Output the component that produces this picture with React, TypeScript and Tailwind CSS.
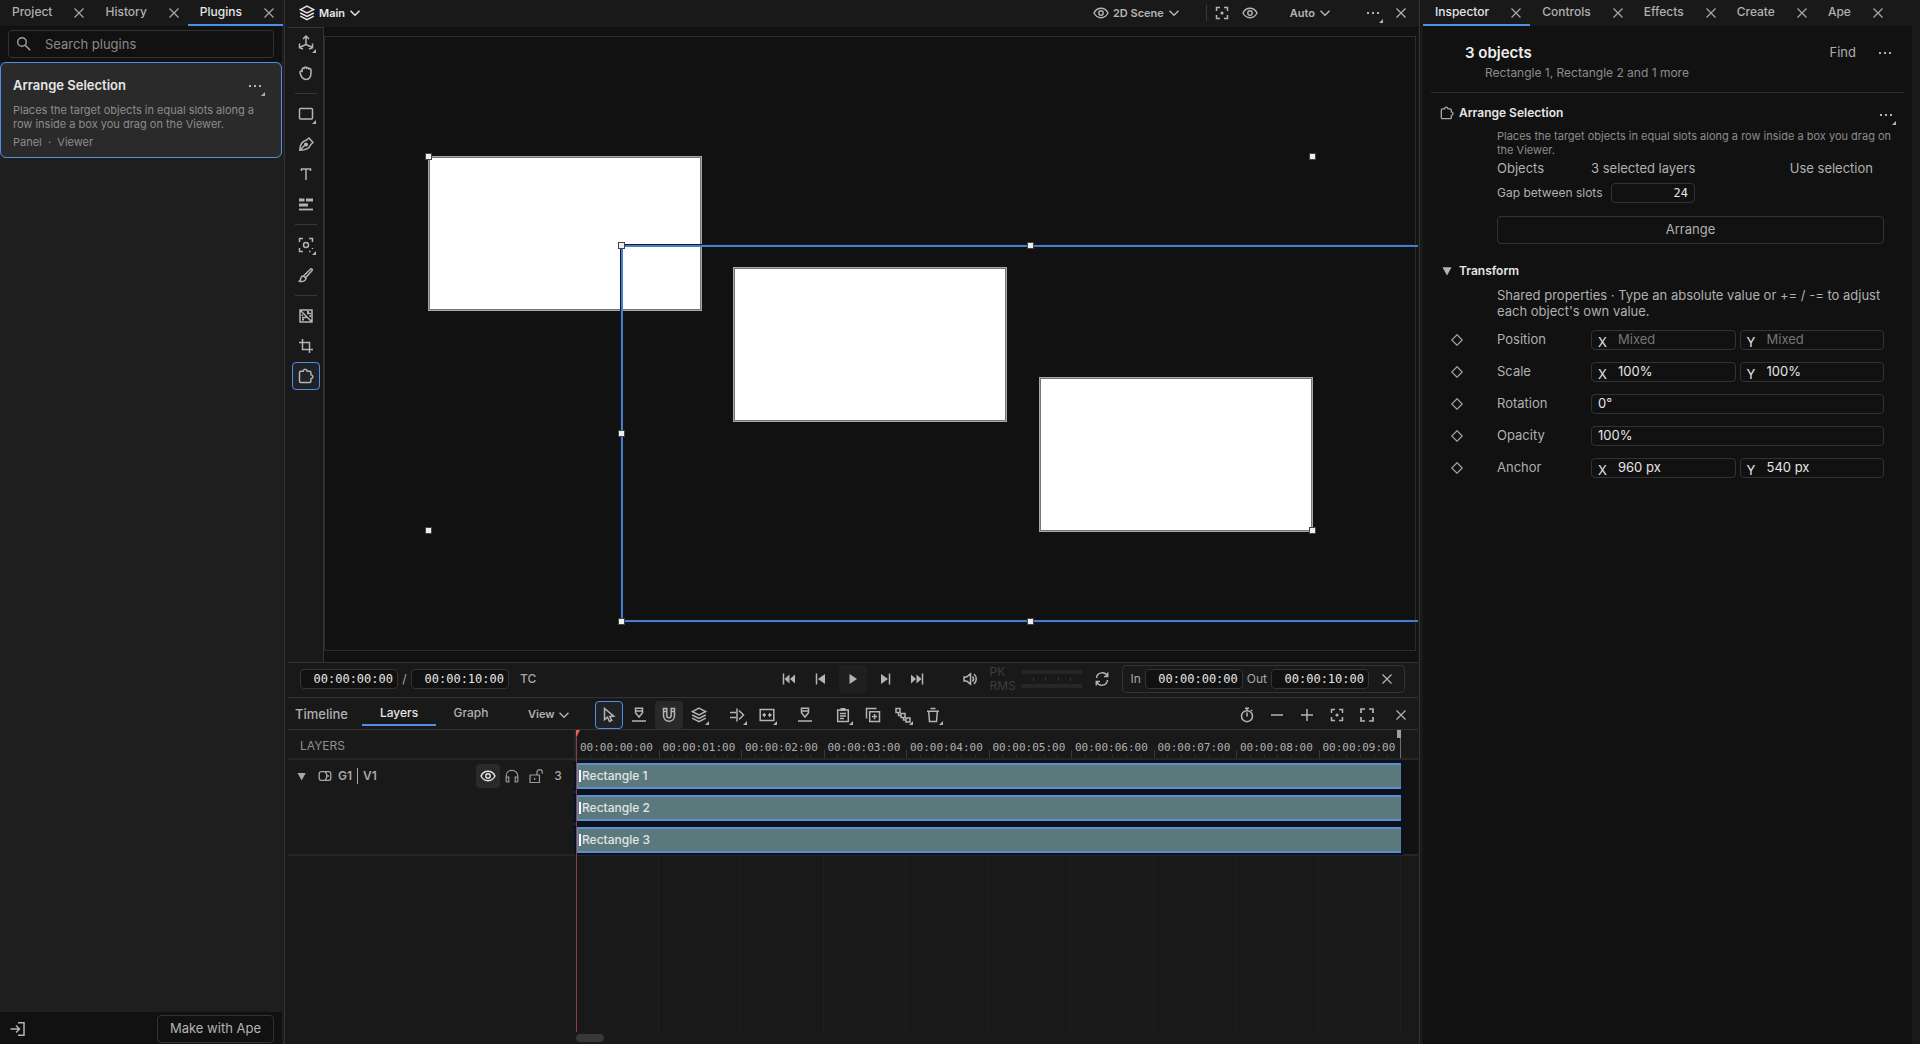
import React, { useState } from 'react';
import clsx from 'clsx';

type IconProps = { className?: string; children: React.ReactNode };

function Icon({ className = 'size-4', children }: IconProps) {
  return (
    <svg
      viewBox="0 0 16 16"
      className={clsx('shrink-0', className)}
      fill="none"
      stroke="currentColor"
      strokeWidth="1.5"
      aria-hidden="true"
    >
      {children}
    </svg>
  );
}

const CloseIcon = () => (
  <Icon><path d="M3.500 3.500l9 9M12.500 3.500l-9 9" strokeWidth="1.200" /></Icon>
);

const ChevronIcon = () => (
  <Icon className="size-3"><path d="M2 5l6 6 6-6" strokeWidth="2" /></Icon>
);

const DotsIcon = () => (
  <Icon><path d="M2 7h2v2H2zM7 7h2v2H7zM12 7h2v2h-2z" fill="currentColor" stroke="none" /></Icon>
);

const LayersIcon = () => (
  <Icon>
    <path d="M8 1.200l6.600 3.400L8 8 1.400 4.600z" />
    <path d="M1.200 8L8 11.400 14.800 8M1.200 11.200L8 14.600l6.800-3.400" />
  </Icon>
);

const EyeIcon = () => (
  <Icon>
    <path d="M1 8c1.500-3 4-4.700 7-4.700S13.500 5 15 8c-1.500 3-4 4.700-7 4.700S2.500 11 1 8z" strokeWidth="1.400" />
    <circle cx="8" cy="8" r="2.200" strokeWidth="1.400" />
  </Icon>
);

const FocusIcon = () => (
  <Icon>
    <path d="M2.500 6V2.500H6M10 2.500h3.500V6M13.500 10v3.500H10M6 13.500H2.500V10" />
    <circle cx="8" cy="8" r="1.600" fill="currentColor" stroke="none" />
  </Icon>
);

const PuzzleIcon = ({ className }: { className?: string }) => (
  <Icon className={className}>
    <path
      d="M1.500 4.500c0-.8.400-1.200 1.200-1.200h2.500c.2-1.400.900-2.100 2-2.100s1.800.7 2 2.100h2.500c.8 0 1.200.4 1.200 1.200v2.300c1.300.2 2 .9 2 2s-.7 1.800-2 2v2.500c0 .8-.4 1.200-1.200 1.200h-9c-.8 0-1.200-.4-1.200-1.200z"
      strokeLinejoin="round"
    />
  </Icon>
);

const PinIcon = () => (
  <Icon>
    <path d="M4.500 1.200h7v4.600L8 10 4.500 5.800zM4.500 4h7M1 14h14" />
  </Icon>
);

const icons = {
  move: (
    <Icon>
      <path d="M8 9.500V1.500M5 4l3-3 3 3M8 9.500l-6.500 3M8 9.500l6.500 3M1.500 8.500v4.200l3.500 1.300M14.500 8.500v4.200l-3.500 1.300" />
    </Icon>
  ),
  hand: (
    <Icon>
      <path d="M2 7.500c-.3-1.500 1.300-2 2-.8L4.200 4c.2-1.400 1.600-1.300 1.800-.3.200-2.200 2.300-2.200 2.500-.2.600-1.400 2.300-1 2.300.6.800-.9 2.200-.4 2.200 1v2.700c0 4.500-1.700 6.700-5 6.700-3 0-5-2.500-6-7z" strokeLinejoin="round" />
    </Icon>
  ),
  rect: <Icon><rect x="1.500" y="2.500" width="13" height="10.500" rx="1" /></Icon>,
  pen: (
    <Icon>
      <path d="M1.800 14.200C1.800 9.500 3.500 5.500 8.500 4L11 2l4 4.500-2.300 2.200c-1.500 4-6.200 5.500-10.900 5.500zM2 14l5-5" />
      <circle cx="8" cy="8.500" r="1.300" fill="currentColor" />
    </Icon>
  ),
  text: <Icon><path d="M3.500 5V3h9v2M8 3v11" /></Icon>,
  align: (
    <Icon>
      <path d="M1 4h5.500M8 4h7M1 9h9" strokeWidth="3" />
      <path d="M1 13.500h14" strokeWidth="1.800" />
    </Icon>
  ),
  target: (
    <Icon>
      <path d="M1.500 5V1.500H5M11 1.500h3.500V5M5 14.500H1.500V11M11 14.500h1.500M14.500 11v1" />
      <circle cx="8" cy="8" r="2.500" />
    </Icon>
  ),
  brush: (
    <Icon>
      <path d="M5.500 9L12.300 2.200c1.200-1 2.600.3 1.600 1.500L7.500 10.800M5.500 9l2.500 2.200c0 3-3.500 3.700-6.500 3 1.500-.7.700-1.700 1.300-3.200.5-1.300 1.700-2 2.700-2z" />
    </Icon>
  ),
  texture: (
    <Icon>
      <path d="M2 2h12v12H2zM2 2l12 12M4 9.500h4M9 5.500h4" />
      <path d="M9 3h2v2H9zM4 10.500h2v2H4zM3.500 6.500h1.500V8H3.500zM11.500 7h1.500v2h-1.500z" fill="currentColor" stroke="none" />
    </Icon>
  ),
  crop: <Icon><path d="M4.500 1v10.500H15M1 4.500h10.500V15" /></Icon>,
  pointer: (
    <Icon><path d="M3.500 1.500v11.200l3-2.500 2 4.300 2.200-1-1.900-4.100 4-.3z" /></Icon>
  ),
  magnet: (
    <Icon>
      <path d="M2.500 1.500h3.300v7c0 3 4.400 3 4.400 0v-7h3.300v7c0 7.600-11 7.600-11 0zM2.500 4.500h3.300M10.200 4.500h3.300" />
    </Icon>
  ),
  split: (
    <Icon><path d="M1 5.500h6M1 10.500h6M8 1.500v13M10 3.500L14.500 8 10 12.500" /></Icon>
  ),
  fit: (
    <Icon>
      <path d="M1.200 2.500h13.600v11H1.200zM4 8h3M9 8h3" />
      <path d="M3 8l3-2.500v5zM13 8l-3-2.500v5z" fill="currentColor" stroke="none" />
    </Icon>
  ),
  clipboard: (
    <Icon>
      <path d="M2.700 3h10.600v11.500H2.700zM5 6.500h6M5 9h6M5 11.500h4" />
      <path d="M5.500 1h5v3h-5z" fill="currentColor" stroke="none" />
    </Icon>
  ),
  duplicate: (
    <Icon><path d="M4.700 4.700h9.800v9.800H4.700zM1.500 11.500v-10h10M9.600 7v5.200M7 9.600h5.200" /></Icon>
  ),
  nodes: (
    <Icon><path d="M1 1.500h4v4H1zM6 6.500h4v4H6zM11 11h4v4h-4zM3.500 5.500v3H6M8.500 10.500v2.500H11" /></Icon>
  ),
  trash: (
    <Icon><path d="M2 4.200h12M5.500 1.500h5M3.700 4.500l.8 10h7l.8-10" /></Icon>
  ),
  timer: (
    <Icon><circle cx="8" cy="9.200" r="5.500" /><path d="M6 1.200h4M8 5.500v4M12 4l1.200-1.200M8 1.200v2.500" /></Icon>
  ),
  minus: <Icon><path d="M2 8h12" /></Icon>,
  plus: <Icon><path d="M2 8h12M8 2v12" /></Icon>,
  expand: <Icon><path d="M2 6V2h4M10 2h4v4M14 10v4h-4M6 14H2v-4" strokeWidth="1.700" /></Icon>,
  first: (
    <Icon>
      <path d="M2.500 2.500v11" />
      <path d="M8.500 3.500v9L3.500 8zM14 3.500v9L9 8z" fill="currentColor" stroke="none" />
    </Icon>
  ),
  prev: (
    <Icon><path d="M3.500 2.500v11" /><path d="M12 3v10L5 8z" fill="currentColor" stroke="none" /></Icon>
  ),
  play: <Icon><path d="M4.500 3v10L12 8z" fill="currentColor" stroke="none" /></Icon>,
  next: (
    <Icon><path d="M12.500 2.500v11" /><path d="M4 3v10L11 8z" fill="currentColor" stroke="none" /></Icon>
  ),
  last: (
    <Icon>
      <path d="M13.500 2.500v11" />
      <path d="M2 3.500v9L7 8zM7.500 3.500v9l5-4.500z" fill="currentColor" stroke="none" />
    </Icon>
  ),
  volume: (
    <Icon><path d="M1 6h2.500L7.500 2.800v10.400L3.500 10H1zM9.500 5.500c1.300 1.400 1.300 3.600 0 5M11 3c3 2.700 3 7.300 0 10" /></Icon>
  ),
  loop: (
    <Icon><path d="M2.500 7c.5-6 8.500-7 10.800-2M13.500 9c-.5 6-8.500 7-10.800 2M13.700 1.500v4H10M2.300 14.500v-4H6" /></Icon>
  ),
  headphones: (
    <Icon><path d="M2.200 14V8c0-7.500 11.600-7.500 11.600 0v6M2.200 9.200h2.600V14H2.200M13.800 9.200h-2.600V14h2.600" strokeWidth="1.200" /></Icon>
  ),
  unlock: (
    <Icon><path d="M2 7h9.500v7.500H2zM9 7V4.300c0-3.600 5.300-3.600 5.300 0v1.500M6.700 10v2" strokeWidth="1.200" /></Icon>
  ),
  group: (
    <Icon>
      <rect x="2.200" y="3.700" width="11.600" height="8.600" rx="2" strokeWidth="1.300" />
      <path d="M8.200 3.700c2 2.600 2 6 0 8.600M10 8h2" strokeWidth="1.300" />
    </Icon>
  ),
};

type ToolButtonProps = {
  label: string;
  children: React.ReactNode;
  active?: boolean;
  filled?: 'soft' | 'strong';
  menu?: boolean;
};

function ToolButton({ label, children, active, filled, menu }: ToolButtonProps) {
  return (
    <button
      type="button"
      aria-label={label}
      aria-pressed={active}
      className={clsx(
        'relative flex size-7 shrink-0 items-center justify-center rounded text-[#b4b4b4]',
        active && 'border border-[#4f8fe6] bg-[#202225]',
        filled === 'soft' && 'bg-[#1f1f1f]',
        filled === 'strong' && 'bg-[#292929]',
      )}
    >
      {children}
      {menu && (
        <svg viewBox="0 0 4 4" className="absolute right-1 bottom-1 size-1" fill="currentColor" aria-hidden="true">
          <path d="M4 0v4H0z" />
        </svg>
      )}
    </button>
  );
}

function PanelTabs({ tabs, active }: { tabs: string[]; active: string }) {
  return (
    <div role="tablist" className="flex h-[26px] shrink-0 bg-[#191919]">
      {tabs.map((tab) => (
        <div
          key={tab}
          className={clsx(
            'flex items-center border-b-2 pl-3',
            tab === active ? 'border-[#4f8fe6]' : 'border-transparent',
          )}
        >
          <button
            type="button"
            role="tab"
            aria-selected={tab === active}
            className={clsx('pr-[15px] text-[12px] leading-4 font-medium', tab === active ? 'text-[#e6e6e6]' : 'text-[#b0b0b0]')}
          >
            {tab}
          </button>
          <button type="button" aria-label={`Close ${tab}`} className="w-[26px] pt-0.5 pl-1 text-[#a8a8a8]">
            <CloseIcon />
          </button>
        </div>
      ))}
    </div>
  );
}

function PluginsPanel() {
  const [query, setQuery] = useState('');
  return (
    <aside className="flex w-[285px] shrink-0 flex-col border-r border-[#333] bg-[#1e1e1e] pr-0.5">
      <PanelTabs tabs={['Project', 'History', 'Plugins']} active="Plugins" />
      <div className="bg-[#111] px-2 py-1">
        <label className="flex h-7 items-center gap-[13px] rounded border border-[#333] pl-[7px] text-[#a0a0a0]">
          <Icon><circle cx="6" cy="6" r="4.300" strokeWidth="1.400" /><path d="M9.200 9.200l5 5" /></Icon>
          <input
            type="search"
            aria-label="Search plugins"
            placeholder="Search plugins"
            value={query}
            onChange={(e) => setQuery(e.target.value)}
            className="min-w-0 flex-1 bg-transparent pt-0.5 text-[13px] text-[#ddd] outline-none placeholder:text-[#8a8a8a]"
          />
        </label>
      </div>
      <article className="rounded-md border border-[#4f8fe6] bg-[#2a2a2a] px-3 pt-[9px] pb-2">
        <div className="flex items-center justify-between">
          <h2 className="text-[13px] font-semibold text-[#e6e6e6]">Arrange Selection</h2>
          <ToolButton label="Plugin menu" menu><DotsIcon /></ToolButton>
        </div>
        <p className="pt-[3px] text-[11px] leading-[14px] text-[#8c8c8c]">
          Places the target objects in equal slots along a row inside a box you drag on the Viewer.
        </p>
        <p className="pt-1 text-[11px] leading-[14px] whitespace-pre text-[#8c8c8c]">Panel  ·  Viewer</p>
      </article>
      <footer className="mt-auto flex h-8 items-center justify-between bg-[#111] pt-px pr-2 pl-2.5">
        <button type="button" aria-label="Collapse panel" className="text-[#b4b4b4]">
          <Icon><path d="M8 1.800h6v12.400H8M0.500 8h9M6 4.500L9.500 8 6 11.500" /></Icon>
        </button>
        <button type="button" className="h-7 rounded border border-[#333] px-3 text-[13px] text-[#b4b4b4]">
          Make with Ape
        </button>
      </footer>
    </aside>
  );
}

function ViewerHeader() {
  return (
    <header className="flex h-[26px] shrink-0 items-center bg-[#191919] pr-[3px] text-[11px] font-semibold text-[#b4b4b4]">
      <button type="button" className="flex items-center gap-1 pl-[11px] text-[#e6e6e6]">
        <LayersIcon /> Main <ChevronIcon />
      </button>
      <button type="button" className="ml-auto flex items-center gap-1">
        <EyeIcon /> 2D Scene <ChevronIcon />
      </button>
      <div className="mr-px ml-[26px] h-4 w-px bg-[#383838]" />
      <ToolButton label="Fit view"><FocusIcon /></ToolButton>
      <ToolButton label="Preview"><EyeIcon /></ToolButton>
      <button type="button" className="mr-7 ml-[26px] flex items-center gap-1">
        Auto <ChevronIcon />
      </button>
      <ToolButton label="Viewer menu" menu><DotsIcon /></ToolButton>
      <ToolButton label="Close viewer"><CloseIcon /></ToolButton>
    </header>
  );
}

const Divider = () => <div className="my-1 h-px w-[22px] bg-[#383838]" />;

function ToolRail() {
  return (
    <nav className="flex w-9 shrink-0 flex-col items-center gap-0.5 border-t border-r border-[#333] bg-[#191919] pt-px">
      <ToolButton label="Move" menu>{icons.move}</ToolButton>
      <ToolButton label="Pan">{icons.hand}</ToolButton>
      <Divider />
      <ToolButton label="Rectangle" menu>{icons.rect}</ToolButton>
      <ToolButton label="Pen">{icons.pen}</ToolButton>
      <ToolButton label="Text">{icons.text}</ToolButton>
      <ToolButton label="Layout">{icons.align}</ToolButton>
      <Divider />
      <ToolButton label="Camera" menu>{icons.target}</ToolButton>
      <ToolButton label="Brush">{icons.brush}</ToolButton>
      <Divider />
      <ToolButton label="Texture">{icons.texture}</ToolButton>
      <ToolButton label="Crop">{icons.crop}</ToolButton>
      <ToolButton label="Arrange Selection" active><PuzzleIcon /></ToolButton>
    </nav>
  );
}

// Positions are in stage pixels, measured from the stage's top left corner
const shapes = [
  { left: 104, top: 129 },
  { left: 409, top: 240 },
  { left: 715, top: 350 },
];

const handles = [
  { left: 101, top: 126 },
  { left: 985, top: 126 },
  { left: 101, top: 500 },
  { left: 985, top: 500 },
  { left: 294, top: 215 },
  { left: 703, top: 215 },
  { left: 294, top: 403 },
  { left: 294, top: 591 },
  { left: 703, top: 591 },
];

function Stage() {
  return (
    <main className="relative flex min-w-0 flex-1 overflow-hidden bg-[#111] pt-[9px] pr-0.5 pb-[11px]">
      <div className="flex-1 border border-[#2c2c2c]" />
      {shapes.map((s) => (
        <div
          key={s.left}
          className="absolute h-[155px] w-[274px] border border-[#a8a8a8] bg-white shadow-[inset_0_0_0_1px_#757575]"
          style={{ left: s.left, top: s.top }}
        />
      ))}
      <div className="absolute top-[218px] left-[297px] h-[377px] w-[830px] border-2 border-[#4a7dc6] shadow-[0_0_0_1px_#0c1a33]" />
      {handles.map((h) => (
        <div
          key={`${h.left}-${h.top}`}
          className="absolute size-[7px] border border-[#444] bg-[#eee]"
          style={{ left: h.left, top: h.top }}
        />
      ))}
    </main>
  );
}

function TimeField({ label, value }: { label: string; value: string }) {
  return (
    <input
      aria-label={label}
      defaultValue={value}
      className="h-5 w-[98px] rounded border border-[#333] bg-[#111] pr-1 text-right font-['DejaVu_Sans_Mono',monospace] text-[12px] text-[#e6e6e6]"
    />
  );
}

function Transport() {
  return (
    <div className="grid h-[35px] shrink-0 grid-cols-[1fr_auto_1fr] items-center border-t border-[#333] bg-[#191919] pb-0.5 text-[12px] text-[#a8a8a8]">
      <div className="flex items-center pl-3">
        <TimeField label="Current time" value="00:00:00:00" />
        <span className="w-[13px] text-center">/</span>
        <TimeField label="Duration" value="00:00:10:00" />
        <button type="button" className="pl-[11px] font-medium">TC</button>
      </div>
      <div className="flex items-center gap-1">
        <ToolButton label="Go to start">{icons.first}</ToolButton>
        <ToolButton label="Previous frame">{icons.prev}</ToolButton>
        <ToolButton label="Play" filled="soft">{icons.play}</ToolButton>
        <ToolButton label="Next frame">{icons.next}</ToolButton>
        <ToolButton label="Go to end">{icons.last}</ToolButton>
      </div>
      <div className="flex items-center justify-end pr-[13px]">
        <ToolButton label="Volume">{icons.volume}</ToolButton>
        <div className="w-9 pl-1 text-[12px] leading-[14px] text-[#3c3c3c]">
          <div>PK</div>
          <div>RMS</div>
        </div>
        <div className="flex w-[61px] flex-col gap-[3px]">
          <div className="h-1 bg-[#262626]" />
          <div className="flex h-1 justify-evenly">
            <div className="w-px bg-[#333]" />
            <div className="w-px bg-[#333]" />
            <div className="w-px bg-[#333]" />
            <div className="w-px bg-[#333]" />
          </div>
          <div className="h-1 bg-[#262626]" />
        </div>
        <div className="px-[6px]">
          <ToolButton label="Loop">{icons.loop}</ToolButton>
        </div>
        <div className="flex h-7 items-center gap-1 rounded border border-[#333] pr-[3px] pl-[7px]">
          In
          <TimeField label="In point" value="00:00:00:00" />
          Out
          <TimeField label="Out point" value="00:00:10:00" />
          <ToolButton label="Clear range"><CloseIcon /></ToolButton>
        </div>
      </div>
    </div>
  );
}

function TimelineToolbar() {
  return (
    <div className="flex h-[33px] shrink-0 items-center border-y border-[#333] text-[12px] text-[#b0b0b0]">
      <h2 className="w-[74px] pt-0.5 pl-[7px] text-[13px] font-medium">Timeline</h2>
      <div role="tablist" className="flex">
        <button type="button" role="tab" aria-selected="true" className="h-[25px] w-[74px] border-b-2 border-[#4f8fe6] font-medium text-[#e6e6e6]">
          Layers
        </button>
        <button type="button" role="tab" aria-selected="false" className="h-[25px] w-[70px] border-b-2 border-transparent font-medium">
          Graph
        </button>
      </div>
      <button type="button" className="ml-[22px] flex items-center gap-1 pt-0.5 text-[11px] font-semibold">
        View <ChevronIcon />
      </button>
      <div className="ml-[25px] flex gap-2.5 pt-[3px]">
        <div className="flex gap-0.5">
          <ToolButton label="Select" active>{icons.pointer}</ToolButton>
          <ToolButton label="Marker"><PinIcon /></ToolButton>
          <ToolButton label="Snap" filled="strong">{icons.magnet}</ToolButton>
          <ToolButton label="Layers" menu><LayersIcon /></ToolButton>
        </div>
        <div className="flex gap-0.5">
          <ToolButton label="Split" menu>{icons.split}</ToolButton>
          <ToolButton label="Stretch" menu>{icons.fit}</ToolButton>
        </div>
        <ToolButton label="Add marker"><PinIcon /></ToolButton>
        <div className="flex gap-0.5">
          <ToolButton label="Paste" menu>{icons.clipboard}</ToolButton>
          <ToolButton label="Duplicate">{icons.duplicate}</ToolButton>
          <ToolButton label="Nest" menu>{icons.nodes}</ToolButton>
          <ToolButton label="Delete" menu>{icons.trash}</ToolButton>
        </div>
      </div>
      <div className="ml-auto flex gap-0.5 pt-[3px] pr-[3px]">
        <ToolButton label="Timing">{icons.timer}</ToolButton>
        <ToolButton label="Zoom out">{icons.minus}</ToolButton>
        <ToolButton label="Zoom in">{icons.plus}</ToolButton>
        <ToolButton label="Frame selection"><FocusIcon /></ToolButton>
        <ToolButton label="Frame all">{icons.expand}</ToolButton>
        <div className="pl-1"><ToolButton label="Close timeline"><CloseIcon /></ToolButton></div>
      </div>
    </div>
  );
}

const seconds = [0, 1, 2, 3, 4, 5, 6, 7, 8, 9];
const clips = ['Rectangle 1', 'Rectangle 2', 'Rectangle 3'];

function LayerList() {
  return (
    <div className="w-[288px] shrink-0">
      <div className="flex h-[30px] items-center border-r-2 border-b-2 border-[#262626] pt-1 pl-3 text-[12px] text-[#909090]">LAYERS</div>
      <div className="h-24 border-r-2 border-b-2 border-[#262626]">
        <div className="flex h-8 items-center pr-1.5 pl-2 text-[12px] font-semibold text-[#a8a8a8]">
          <button type="button" aria-label="Collapse group" className="w-[21px]">
            <Icon className="size-3"><path d="M2 4h11L7.500 14z" fill="currentColor" stroke="none" /></Icon>
          </button>
          {icons.group}
          <span className="pl-[5px]">G1</span>
          <span className="mx-[5px] h-4 w-px bg-[#a8a8a8]" />
          <span>V1</span>
          <div className="ml-auto flex items-center">
            <button type="button" aria-label="Toggle visibility" className="flex size-6 items-center justify-center rounded bg-[#292929] text-[#e6e6e6]">
              <EyeIcon />
            </button>
            <button type="button" aria-label="Solo" className="flex size-6 items-center justify-center text-[#999]">{icons.headphones}</button>
            <button type="button" aria-label="Lock" className="flex size-6 items-center justify-center text-[#999]">{icons.unlock}</button>
            <span className="w-5 text-center font-medium">3</span>
          </div>
        </div>
      </div>
    </div>
  );
}

function Tracks() {
  return (
    <div className="relative flex min-w-0 flex-1 flex-col">
      <div className="flex h-[30px] border-b-2 border-[#262626] pr-[17px]">
        {seconds.map((s) => (
          <div key={s} className="relative flex flex-1 items-center pt-2 pl-1 font-['DejaVu_Sans_Mono',monospace] text-[11px] text-[#b0b0b0]">
            {`00:00:0${s}:00`}
            <div className="absolute inset-x-0 bottom-0 flex items-end">
              <div className="h-2 flex-1 border-l border-[#383838]" />
              <div className="h-[3px] flex-1 border-l border-[#303030]" />
              <div className="h-[3px] flex-1 border-l border-[#303030]" />
              <div className="h-[3px] flex-1 border-l border-[#303030]" />
              <div className="h-[3px] flex-1 border-l border-[#303030]" />
              <div className="h-[3px] flex-1 border-l border-[#303030]" />
            </div>
          </div>
        ))}
      </div>
      <div className="h-24 border-b-2 border-[#262626] bg-[#111]">
        {clips.map((clip) => (
          <div key={clip} className="flex h-8 items-start pt-[3px] pr-[17px]">
            <div className="flex h-[26px] flex-1 items-center border-y-2 border-l-2 border-[#5f8ccb] bg-[#5b797d] pl-px text-[12px] font-medium text-[#e0e6e6] shadow-[0_0_0_2px_#071225]">
              <span className="mr-px h-3 w-0.5 bg-white" />
              {clip}
            </div>
          </div>
        ))}
      </div>
      <div className="flex flex-1 pr-[17px]">
        {seconds.map((s) => (
          <div key={s} className="flex-1 border-r border-[#1f1f1f]" />
        ))}
      </div>
      <div className="flex h-3 items-center">
        <div className="h-2 w-7 rounded bg-[#383838]" />
      </div>
      <div className="absolute top-0 bottom-3 left-0 w-px bg-[#8c4045]" />
      <svg viewBox="0 0 4 6" className="absolute top-0 left-0 h-1.5 w-1" fill="#ee5a64" aria-hidden="true">
        <path d="M0 0h4L1 6H0z" />
      </svg>
      <div className="absolute top-0 right-[17px] h-7 w-px bg-[#6e6e6e]" />
      <div className="absolute top-0 right-[17px] h-2 w-1 bg-[#a0a0a0]" />
    </div>
  );
}

type Field = { axis?: string; value?: string; placeholder?: string };

function PropertyRow({ label, fields }: { label: string; fields: Field[] }) {
  return (
    <div className="flex h-8 items-center">
      <button type="button" aria-label={`Keyframe ${label}`} className="w-[46px] text-[#a8a8a8]">
        <Icon className="size-3"><path d="M8 1l7 7-7 7-7-7z" /></Icon>
      </button>
      <span className="w-[94px] text-[13px] text-[#b0b0b0]">{label}</span>
      <div className="flex flex-1 gap-1">
        {fields.map((f) => (
          <label key={f.axis ?? label} className="flex h-5 min-w-0 flex-1 items-center rounded border border-[#333] pl-1.5 text-[13px] text-[#e6e6e6]">
            {f.axis && <span className="w-5 shrink-0 pt-[5px]">{f.axis}</span>}
            <input
              aria-label={`${label} ${f.axis ?? ''}`}
              defaultValue={f.value}
              placeholder={f.placeholder}
              className="w-full min-w-0 bg-transparent outline-none placeholder:text-[#757575]"
            />
          </label>
        ))}
      </div>
    </div>
  );
}

function InspectorPanel() {
  return (
    <aside className="flex w-[501px] shrink-0 flex-col border-l border-[#333] bg-[#191919] pl-[3px]">
      <PanelTabs tabs={['Inspector', 'Controls', 'Effects', 'Create', 'Ape']} active="Inspector" />
      <div className="mr-2 flex-1 bg-[#111] px-2 text-[13px] text-[#b0b0b0]">
        <div className="border-b border-[#2e2e2e] pt-[17px] pb-2.5">
          <div className="flex h-5 items-center pr-[11px] pl-[34px]">
            <h1 className="text-[15px] font-semibold text-[#eee]">3 objects</h1>
            <button type="button" className="ml-auto">Find</button>
            <button type="button" aria-label="Selection menu" className="ml-[21px]"><DotsIcon /></button>
          </div>
          <p className="pt-px pl-[54px] text-[12px] leading-[18px] text-[#8c8c8c]">Rectangle 1, Rectangle 2 and 1 more</p>
        </div>

        <section className="pr-5 pl-[9px]">
          <div className="-mr-4 flex h-10 items-center gap-[5px]">
            <span className="text-[#a8a8a8]"><PuzzleIcon className="size-3.5" /></span>
            <h2 className="text-[12px] font-semibold text-[#e6e6e6]">Arrange Selection</h2>
            <div className="ml-auto pt-1"><ToolButton label="Section menu" menu><DotsIcon /></ToolButton></div>
          </div>
          <div className="-mt-3 pl-[57px]">
            <p className="-mr-4 pt-2 text-[11px] leading-[14px] text-[#8c8c8c]">
              Places the target objects in equal slots along a row inside a box you drag on the Viewer.
            </p>
            <div className="flex h-6 items-center">
              <span className="w-[94px]">Objects</span>
              <span>3 selected layers</span>
              <button type="button" className="mr-[11px] ml-auto">Use selection</button>
            </div>
            <label className="flex h-6 items-center text-[12px]">
              <span className="w-[114px]">Gap between slots</span>
              <input
                defaultValue="24"
                className="h-5 w-[84px] rounded border border-[#333] bg-transparent pr-1.5 text-right font-['DejaVu_Sans_Mono',monospace] text-[12px] text-[#e6e6e6]"
              />
            </label>
            <button type="button" className="mt-[11px] h-7 w-full rounded border border-[#333]">Arrange</button>
          </div>
        </section>

        <section className="pt-[19px] pr-5 pl-2">
          <h2 className="flex h-4 items-center text-[12px] font-semibold text-[#e6e6e6]">
            <button type="button" aria-label="Collapse Transform" className="w-5 pl-0.5 text-[#b4b4b4]">
              <Icon className="size-3"><path d="M2 3h12L8 14z" fill="currentColor" stroke="none" /></Icon>
            </button>
            Transform
          </h2>
          <p className="pt-2 pb-[5px] pl-[58px] leading-4">
            Shared properties · Type an absolute value or += / -= to adjust each object's own value.
          </p>
          <div className="pl-3">
            <PropertyRow label="Position" fields={[{ axis: 'X', placeholder: 'Mixed' }, { axis: 'Y', placeholder: 'Mixed' }]} />
            <PropertyRow label="Scale" fields={[{ axis: 'X', value: '100%' }, { axis: 'Y', value: '100%' }]} />
            <PropertyRow label="Rotation" fields={[{ value: '0°' }]} />
            <PropertyRow label="Opacity" fields={[{ value: '100%' }]} />
            <PropertyRow label="Anchor" fields={[{ axis: 'X', value: '960 px' }, { axis: 'Y', value: '540 px' }]} />
          </div>
        </section>
      </div>
    </aside>
  );
}

export default function App() {
  return (
    <div className="flex h-screen overflow-hidden bg-[#191919] font-[Inter,'Liberation_Sans',sans-serif]">
      <PluginsPanel />
      <div className="flex min-w-0 flex-1 flex-col pr-px pl-[3px]">
        <ViewerHeader />
        <div className="flex min-h-0 flex-1 pt-px">
          <ToolRail />
          <Stage />
        </div>
        <Transport />
        <section className="flex h-[347px] shrink-0 flex-col">
          <TimelineToolbar />
          <div className="flex min-h-0 flex-1">
            <LayerList />
            <Tracks />
          </div>
        </section>
      </div>
      <InspectorPanel />
    </div>
  );
}
